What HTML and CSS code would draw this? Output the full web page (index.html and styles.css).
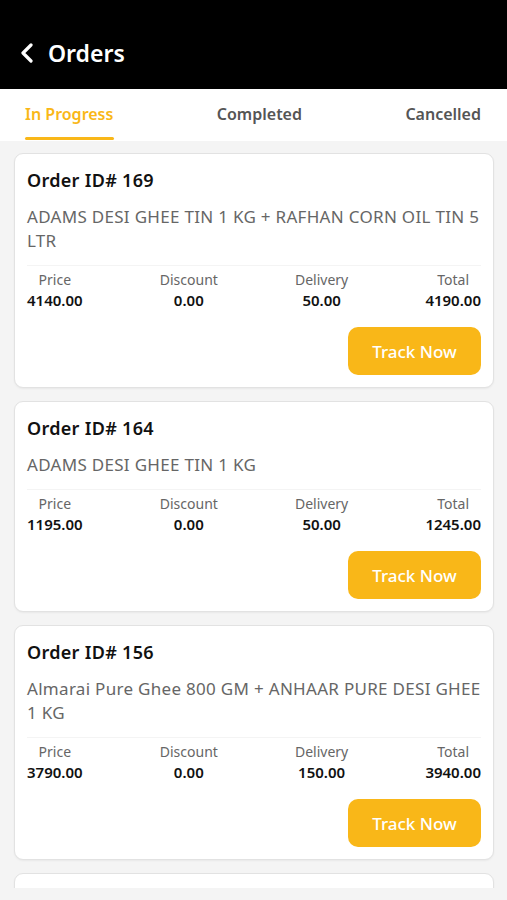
FILE: index.html
```html
<!DOCTYPE html>
<html lang="en">
<head>
  <meta charset="UTF-8" />
  <meta name="viewport" content="width=device-width, initial-scale=1.0"/>
  <title>Orders</title>
  <link rel="stylesheet" href="styles.css">
</head>
<body>
  <header class="topbar">
    <svg class="back" width="14" height="20" viewBox="0 0 14 20">
      <path d="M11 2 L3 10 L11 18" fill="none" stroke="#fff" stroke-width="3.2" stroke-linecap="round" stroke-linejoin="round"/>
    </svg>
    <h1>Orders</h1>
  </header>

  <nav class="tabs">
    <span class="tab active">In Progress</span>
    <span class="tab">Completed</span>
    <span class="tab">Cancelled</span>
  </nav>

  <main class="list">
    <div class="card">
      <h2>Order ID# 169</h2>
      <p class="items">ADAMS DESI GHEE TIN 1 KG + RAFHAN CORN OIL TIN 5 LTR</p>
      <div class="stats">
        <div class="stat"><span>Price</span><b>4140.00</b></div>
        <div class="stat"><span>Discount</span><b>0.00</b></div>
        <div class="stat"><span>Delivery</span><b>50.00</b></div>
        <div class="stat"><span>Total</span><b>4190.00</b></div>
      </div>
      <div class="actions"><button>Track Now</button></div>
    </div>

    <div class="card">
      <h2>Order ID# 164</h2>
      <p class="items">ADAMS DESI GHEE TIN 1 KG</p>
      <div class="stats">
        <div class="stat"><span>Price</span><b>1195.00</b></div>
        <div class="stat"><span>Discount</span><b>0.00</b></div>
        <div class="stat"><span>Delivery</span><b>50.00</b></div>
        <div class="stat"><span>Total</span><b>1245.00</b></div>
      </div>
      <div class="actions"><button>Track Now</button></div>
    </div>

    <div class="card">
      <h2>Order ID# 156</h2>
      <p class="items">Almarai Pure Ghee 800 GM + ANHAAR PURE DESI GHEE 1 KG</p>
      <div class="stats">
        <div class="stat"><span>Price</span><b>3790.00</b></div>
        <div class="stat"><span>Discount</span><b>0.00</b></div>
        <div class="stat"><span>Delivery</span><b>150.00</b></div>
        <div class="stat"><span>Total</span><b>3940.00</b></div>
      </div>
      <div class="actions"><button>Track Now</button></div>
    </div>

    <!-- next card, only its top edge shows -->
    <div class="card peek"></div>
  </main>
</body>
</html>
```

FILE: styles.css
```css
:root {
  --accent: #f9b718;
  --bg: #f4f4f4;
  --text: #111;
  --muted: #666;
  --border: #e2e2e2;
}

* {
  box-sizing: border-box;
  margin: 0;
  padding: 0;
}

body {
  font-family: "Noto Sans", sans-serif;
  background: var(--bg);
  color: var(--text);
  height: 900px;
  overflow: hidden;
}

.topbar {
  background: #000;
  height: 89px;
  display: flex;
  align-items: flex-end;
  gap: 14px;
  padding: 0 0 21px 20px;
}

.back {
  margin-bottom: 5px;
}

.topbar h1 {
  color: #fff;
  font-size: 23px;
  font-weight: 600;
  line-height: 30px;
}

.tabs {
  background: #fff;
  height: 52px;
  display: flex;
  justify-content: space-between;
  align-items: center;
  padding: 0 26px 0 25px;
}

.tab {
  position: relative;
  font-size: 16px;
  font-weight: 600;
  color: #555;
  line-height: 22px;
  margin-bottom: 2px;
}

.tab.active {
  color: var(--accent);
}

.tab.active::after {
  content: "";
  position: absolute;
  left: 0;
  right: -1px;
  bottom: -15px;
  height: 3px;
  border-radius: 2px;
  background: var(--accent);
}

.list {
  height: 747px;
  overflow: hidden;
  padding: 12px 13px 0 14px;
  display: flex;
  flex-direction: column;
  gap: 13px;
}

.card {
  flex-shrink: 0;
  background: #fff;
  border: 1px solid var(--border);
  border-radius: 9px;
  padding: 14px 12px 12px 12px;
  box-shadow: 0 1px 2px rgba(0, 0, 0, 0.05);
}

.card.peek {
  height: 60px;
}

.card h2 {
  font-size: 18px;
  font-weight: 600;
  line-height: 24px;
  letter-spacing: 0.3px;
}

.items {
  margin-top: 13px;
  font-size: 17px;
  line-height: 24px;
  letter-spacing: 0.3px;
  color: var(--muted);
}

.stats {
  margin-top: 12px;
  padding-top: 4px;
  border-top: 1px solid #f4f4f4;
  display: flex;
  justify-content: space-between;
}

.stat {
  display: flex;
  flex-direction: column;
  align-items: center;
  line-height: 20px;
}

.stat span {
  font-size: 14px;
  color: var(--muted);
}

.stat b {
  font-size: 15px;
  font-weight: 600;
  color: #111;
}

.actions {
  display: flex;
  justify-content: flex-end;
  margin-top: 17px;
}

button {
  width: 133px;
  height: 48px;
  border: none;
  border-radius: 10px;
  background: var(--accent);
  color: #fff;
  font-family: inherit;
  font-size: 17px;
  font-weight: 500;
}
```
